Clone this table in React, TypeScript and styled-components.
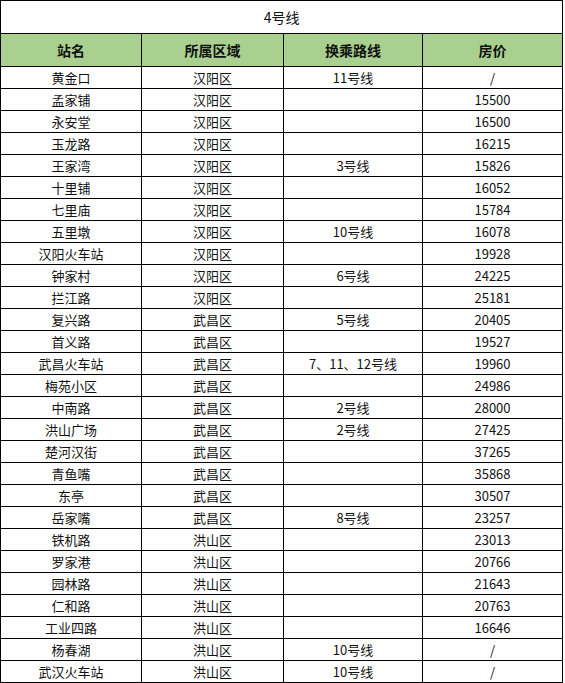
import styled, { createGlobalStyle } from 'styled-components';

type Station = {
  name: string;
  district: string;
  transfer: string;
  price: string;
};

const stations: Station[] = [
  { name: '黄金口', district: '汉阳区', transfer: '11号线', price: '/' },
  { name: '孟家铺', district: '汉阳区', transfer: '', price: '15500' },
  { name: '永安堂', district: '汉阳区', transfer: '', price: '16500' },
  { name: '玉龙路', district: '汉阳区', transfer: '', price: '16215' },
  { name: '王家湾', district: '汉阳区', transfer: '3号线', price: '15826' },
  { name: '十里铺', district: '汉阳区', transfer: '', price: '16052' },
  { name: '七里庙', district: '汉阳区', transfer: '', price: '15784' },
  { name: '五里墩', district: '汉阳区', transfer: '10号线', price: '16078' },
  { name: '汉阳火车站', district: '汉阳区', transfer: '', price: '19928' },
  { name: '钟家村', district: '汉阳区', transfer: '6号线', price: '24225' },
  { name: '拦江路', district: '汉阳区', transfer: '', price: '25181' },
  { name: '复兴路', district: '武昌区', transfer: '5号线', price: '20405' },
  { name: '首义路', district: '武昌区', transfer: '', price: '19527' },
  { name: '武昌火车站', district: '武昌区', transfer: '7、11、12号线', price: '19960' },
  { name: '梅苑小区', district: '武昌区', transfer: '', price: '24986' },
  { name: '中南路', district: '武昌区', transfer: '2号线', price: '28000' },
  { name: '洪山广场', district: '武昌区', transfer: '2号线', price: '27425' },
  { name: '楚河汉街', district: '武昌区', transfer: '', price: '37265' },
  { name: '青鱼嘴', district: '武昌区', transfer: '', price: '35868' },
  { name: '东亭', district: '武昌区', transfer: '', price: '30507' },
  { name: '岳家嘴', district: '武昌区', transfer: '8号线', price: '23257' },
  { name: '铁机路', district: '洪山区', transfer: '', price: '23013' },
  { name: '罗家港', district: '洪山区', transfer: '', price: '20766' },
  { name: '园林路', district: '洪山区', transfer: '', price: '21643' },
  { name: '仁和路', district: '洪山区', transfer: '', price: '20763' },
  { name: '工业四路', district: '洪山区', transfer: '', price: '16646' },
  { name: '杨春湖', district: '洪山区', transfer: '10号线', price: '/' },
  { name: '武汉火车站', district: '洪山区', transfer: '10号线', price: '/' },
];

const GlobalStyle = createGlobalStyle`
  body {
    margin: 0;
    background: #ffffff;
  }
`;

export default function App() {
  return (
    <>
      <GlobalStyle />
      <Table>
        <colgroup>
          <col style={{ width: 141 }} />
          <col style={{ width: 142 }} />
          <col style={{ width: 139 }} />
          <col style={{ width: 140 }} />
        </colgroup>
        <thead>
          <tr>
            <TitleCell colSpan={4}>4号线</TitleCell>
          </tr>
          <tr>
            <HeadCell>站名</HeadCell>
            <HeadCell>所属区域</HeadCell>
            <HeadCell>换乘路线</HeadCell>
            <HeadCell>房价</HeadCell>
          </tr>
        </thead>
        <tbody>
          {stations.map((s) => (
            <tr key={s.name}>
              <Cell>{s.name}</Cell>
              <Cell>{s.district}</Cell>
              <Cell>{s.transfer}</Cell>
              <Cell>{s.price}</Cell>
            </tr>
          ))}
        </tbody>
      </Table>
    </>
  );
}

const Table = styled.table`
  border-collapse: collapse;
  table-layout: fixed;
  width: 563px;
  font-family: 'Noto Sans CJK SC', 'Noto Sans', sans-serif;
  font-size: 13px;
  color: #111111;
`;

const BaseCell = styled.td`
  border: 1px solid #000000;
  padding: 0;
  text-align: center;
  vertical-align: middle;
  line-height: 16px;
  white-space: nowrap;
`;

const TitleCell = styled(BaseCell).attrs({ as: 'th' })`
  height: 32px;
  font-size: 14px;
  font-weight: 400;
  background: #ffffff;
`;

const HeadCell = styled(BaseCell).attrs({ as: 'th' })`
  height: 32px;
  font-size: 14px;
  font-weight: 700;
  background: #a9d08e;
`;

const Cell = styled(BaseCell)`
  height: 21px;
`;
